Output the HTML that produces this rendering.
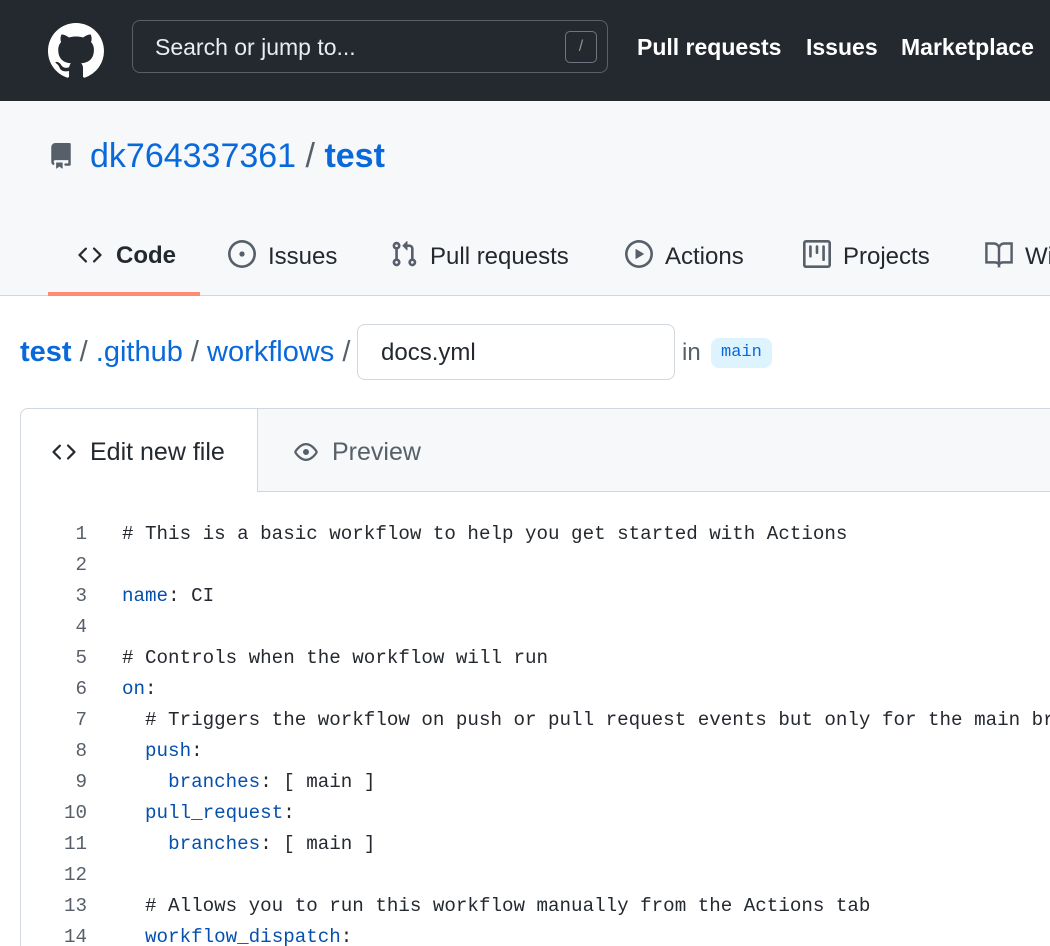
<!DOCTYPE html>
<html><head><meta charset="utf-8"><style>
*{margin:0;padding:0;box-sizing:border-box}
html,body{width:1050px;height:946px;overflow:hidden}
body{background:#fff;font-family:"Liberation Sans",sans-serif;color:#24292f;position:relative}
.hdr{position:absolute;left:0;top:0;width:1050px;height:101px;background:#24292f}
.search{position:absolute;left:132px;top:20px;width:476px;height:53px;border:1px solid #57606a;border-radius:8px;color:#e6edf3;font-size:23px;padding:13px 0 0 22px}
.slash{position:absolute;right:10px;top:10px;width:32px;height:32px;border:1px solid #6e7681;border-radius:5px;color:#8b949e;font-size:16px;text-align:center;line-height:30px}
.nav{position:absolute;top:34px;color:#fff;font-weight:bold;font-size:23px;white-space:nowrap}
.sub{position:absolute;left:0;top:101px;width:1050px;height:195px;background:#f6f8fa;border-bottom:1px solid #d0d7de}
.repo{position:absolute;left:90px;top:137px;font-size:34px;color:#0969da;white-space:nowrap}
.tab{position:absolute;top:240px;font-size:24px;color:#24292f;white-space:nowrap}
.tab svg{vertical-align:-4px;margin-right:12px}
.bc{position:absolute;left:20px;top:336px;font-size:29px;color:#0969da;white-space:nowrap}
.bc span.s{color:#57606a}
.fname{position:absolute;left:357px;top:324px;width:318px;height:56px;border:1px solid #d0d7de;border-radius:8px;font-size:24px;padding:14px 0 0 23px}
.in{position:absolute;left:682px;top:339px;font-size:24px;color:#57606a}
.br{position:absolute;left:711px;top:338px;height:30px;padding:0 10px;background:#ddf4ff;color:#0969da;border-radius:8px;font-family:"Liberation Mono",monospace;font-size:17px;line-height:30px}
.box{position:absolute;left:20px;top:408px;width:1050px;height:560px;border:1px solid #d0d7de;border-radius:8px 0 0 0}
.tbar{position:absolute;left:257px;top:409px;width:800px;height:83px;background:#f6f8fa;border-left:1px solid #d0d7de;border-bottom:1px solid #d0d7de}
.code{position:absolute;left:0;top:519px;font-family:"Liberation Mono",monospace;font-size:19.2px;line-height:31px;white-space:pre}
.ln{position:absolute;width:87px;text-align:right;color:#57606a}
.k{color:#0550ae}
</style></head><body>
<div class="hdr">
<svg style="position:absolute;left:48px;top:23px" width="56" height="56" viewBox="0 0 16 16"><path fill="#fff" d="M8 0C3.580 0 0 3.580 0 8c0 3.540 2.290 6.530 5.470 7.590.4.07.55-.17.55-.38 0-.19-.01-.82-.01-1.490-2.010.37-2.530-.49-2.690-.94-.09-.23-.48-.94-.82-1.130-.28-.15-.68-.52-.01-.53.63-.01 1.080.58 1.230.82.72 1.210 1.870.87 2.330.66.07-.52.28-.87.51-1.070-1.780-.2-3.640-.89-3.640-3.950 0-.87.31-1.590.82-2.150-.08-.2-.36-1.020.08-2.120 0 0 .67-.21 2.200.82.64-.18 1.320-.27 2-.27.68 0 1.360.09 2 .27 1.530-1.040 2.200-.82 2.200-.82.44 1.100.16 1.920.08 2.120.51.56.82 1.270.82 2.150 0 3.070-1.870 3.750-3.650 3.950.29.25.54.73.54 1.480 0 1.070-.01 1.930-.01 2.200 0 .21.15.46.55.38A8.013 8.013 0 0016 8c0-4.420-3.580-8-8-8z"/></svg>
<div class="search">Search or jump to...<div class="slash">/</div></div>
<div class="nav" style="left:637px">Pull requests</div>
<div class="nav" style="left:806px">Issues</div>
<div class="nav" style="left:901px">Marketplace</div>
</div>
<div class="sub"></div>
<svg style="position:absolute;left:48px;top:141px" width="26" height="30" viewBox="0 0 16 16"><path fill="#57606a" d="M2 2.5A2.5 2.5 0 014.5 0h8.75a.75.75 0 01.75.75v12.5a.75.75 0 01-.75.75h-2.5a.75.75 0 110-1.5h1.75v-2h-8a1 1 0 00-.714 1.7.75.75 0 01-1.072 1.05A2.495 2.495 0 012 11.5v-9zm10.5-1V9h-8c-.356 0-.694.074-1 .208V2.5a1 1 0 011-1h8zM5 12.25v3.25a.25.25 0 00.4.2l1.45-1.087a.25.25 0 01.3 0L8.6 15.7a.25.25 0 00.4-.2v-3.25a.25.25 0 00-.25-.25h-3.5a.25.25 0 00-.25.25z"/></svg>
<div class="repo">dk764337361 <span style="color:#57606a">/</span> <b>test</b></div>
<div class="tab" style="left:76px;top:242px;font-weight:bold"><svg width="28" height="24" viewBox="0 0 16 16"><path fill="#24292f" d="M4.72 3.22a.75.75 0 011.06 1.06L2.06 8l3.72 3.72a.75.75 0 11-1.06 1.06L.47 8.53a.75.75 0 010-1.06l4.25-4.25zm6.56 0a.75.75 0 10-1.06 1.06L13.94 8l-3.72 3.72a.75.75 0 101.06 1.06l4.25-4.25a.75.75 0 000-1.06l-4.25-4.25z"/></svg>Code</div>
<div style="position:absolute;left:48px;top:292px;width:152px;height:4px;background:#fd8c73"></div>
<div class="tab" style="left:228px"><svg width="28" height="28" viewBox="0 0 16 16"><path fill="#57606a" d="M8 9.5a1.5 1.5 0 100-3 1.5 1.5 0 000 3z"/><path fill="#57606a" d="M8 0a8 8 0 110 16A8 8 0 018 0zM1.5 8a6.5 6.5 0 1013 0 6.5 6.5 0 00-13 0z"/></svg>Issues</div>
<div class="tab" style="left:390px"><svg width="28" height="28" viewBox="0 0 16 16"><path fill="#57606a" d="M7.177 3.073L9.573.677A.25.25 0 0110 .854v4.792a.25.25 0 01-.427.177L7.177 3.427a.25.25 0 010-.354zM3.75 2.5a.75.75 0 100 1.5.75.75 0 000-1.5zm-2.25.75a2.25 2.25 0 113 2.122v5.256a2.251 2.251 0 11-1.5 0V5.372A2.25 2.25 0 011.5 3.25zM11 2.5h-1V4h1a1 1 0 011 1v5.628a2.251 2.251 0 101.5 0V5A2.5 2.5 0 0011 2.5zm1 10.25a.75.75 0 111.5 0 .75.75 0 01-1.5 0zM3.75 12a.75.75 0 100 1.5.75.75 0 000-1.5z"/></svg>Pull requests</div>
<div class="tab" style="left:625px"><svg width="28" height="28" viewBox="0 0 16 16"><path fill="#57606a" d="M1.5 8a6.5 6.5 0 1113 0 6.5 6.5 0 01-13 0zM8 0a8 8 0 100 16A8 8 0 008 0zM6.379 5.227A.25.25 0 006 5.442v5.117a.25.25 0 00.379.214l4.264-2.559a.25.25 0 000-.428L6.379 5.227z"/></svg>Actions</div>
<div class="tab" style="left:803px"><svg width="28" height="28" viewBox="0 0 16 16"><path fill="#57606a" d="M1.75 0A1.75 1.75 0 000 1.75v12.5C0 15.216.784 16 1.75 16h12.5A1.75 1.75 0 0016 14.25V1.75A1.75 1.75 0 0014.25 0H1.75zM1.5 1.75a.25.25 0 01.25-.25h12.5a.25.25 0 01.25.25v12.5a.25.25 0 01-.25.25H1.75a.25.25 0 01-.25-.25V1.75zM11.75 3a.75.75 0 00-.75.75v7.5a.75.75 0 001.5 0v-7.5a.75.75 0 00-.75-.75zm-8.25.75a.75.75 0 011.5 0v5.5a.75.75 0 01-1.5 0v-5.5zM8 3a.75.75 0 00-.75.75v3.5a.75.75 0 001.5 0v-3.5A.75.75 0 008 3z"/></svg>Projects</div>
<div class="tab" style="left:985px"><svg width="28" height="28" viewBox="0 0 16 16"><path fill="none" stroke="#57606a" stroke-width="1.4" d="M.8 2h4.2c1.6 0 3 1.2 3 2.8V14c-.5-.7-1.4-1.2-2.4-1.2H.8zM15.2 2H11c-1.6 0-3 1.2-3 2.8V14c.5-.7 1.4-1.2 2.4-1.2h4.8z"/></svg>Wiki</div>
<div class="bc"><b>test</b> <span class="s">/</span> .github <span class="s">/</span> workflows <span class="s">/</span></div>
<div class="fname">docs.yml</div>
<div class="in">in</div>
<div class="br">main</div>
<div class="box"></div>
<div class="tbar"></div>
<div class="tab" style="left:50px;top:438px;font-size:25px"><svg width="28" height="24" viewBox="0 0 16 16"><path fill="#24292f" d="M4.72 3.22a.75.75 0 011.06 1.06L2.06 8l3.72 3.72a.75.75 0 11-1.06 1.06L.47 8.53a.75.75 0 010-1.06l4.25-4.25zm6.56 0a.75.75 0 10-1.06 1.06L13.94 8l-3.72 3.72a.75.75 0 101.06 1.06l4.25-4.25a.75.75 0 000-1.06l-4.25-4.25z"/></svg>Edit new file</div>
<div class="tab" style="left:292px;top:438px;font-size:25px;color:#57606a"><svg width="28" height="24" viewBox="0 0 16 16"><path fill="#57606a" d="M1.679 7.932c.412-.621 1.242-1.75 2.366-2.717C5.175 4.242 6.527 3.5 8 3.5c1.473 0 2.824.742 3.955 1.715 1.124.967 1.954 2.096 2.366 2.717a.119.119 0 010 .136c-.412.621-1.242 1.75-2.366 2.717C10.825 11.758 9.473 12.5 8 12.5c-1.473 0-2.824-.742-3.955-1.715C2.92 9.818 2.09 8.690 1.679 8.068a.119.119 0 010-.136zM8 2c-1.981 0-3.67.992-4.933 2.078C1.797 5.169.88 6.423.43 7.1a1.619 1.619 0 000 1.798c.45.678 1.367 1.932 2.637 3.024C4.329 13.008 6.019 14 8 14c1.981 0 3.67-.992 4.933-2.078 1.27-1.091 2.187-2.345 2.637-3.023a1.619 1.619 0 000-1.798c-.45-.678-1.367-1.932-2.637-3.023C11.671 2.992 9.981 2 8 2zm0 8a2 2 0 100-4 2 2 0 000 4z"/></svg>Preview</div>
<div class="code">
<div class="ln" style="top:0">1</div><div class="ln" style="top:31px">2</div><div class="ln" style="top:62px">3</div><div class="ln" style="top:93px">4</div><div class="ln" style="top:124px">5</div><div class="ln" style="top:155px">6</div><div class="ln" style="top:186px">7</div><div class="ln" style="top:217px">8</div><div class="ln" style="top:248px">9</div><div class="ln" style="top:279px">10</div><div class="ln" style="top:310px">11</div><div class="ln" style="top:341px">12</div><div class="ln" style="top:372px">13</div><div class="ln" style="top:403px">14</div>
<div style="position:absolute;left:122px;top:0"># This is a basic workflow to help you get started with Actions

<span class="k">name</span>: CI

# Controls when the workflow will run
<span class="k">on</span>:
  # Triggers the workflow on push or pull request events but only for the main branch
  <span class="k">push</span>:
    <span class="k">branches</span>: [ main ]
  <span class="k">pull_request</span>:
    <span class="k">branches</span>: [ main ]

  # Allows you to run this workflow manually from the Actions tab
  <span class="k">workflow_dispatch</span>:</div>
</div>
</body></html>
